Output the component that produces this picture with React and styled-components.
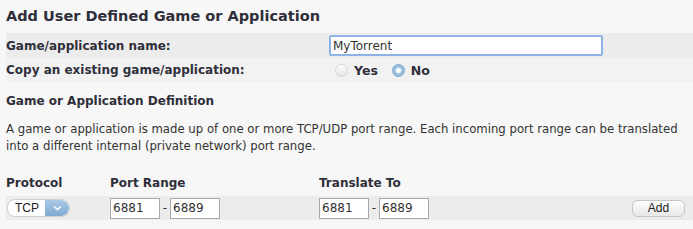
import React from "react";
import styled, { createGlobalStyle } from "styled-components";

const GlobalStyle = createGlobalStyle`
  html, body {
    margin: 0;
    padding: 0;
    background: #f7f7f7;
  }
  body {
    font-family: "DejaVu Sans", Verdana, sans-serif;
    color: #333;
  }
`;

const Page = styled.div`
  width: 693px;
  height: 229px;
  overflow: hidden;
  background: #f7f7f7;
  padding-top: 6px;
  box-sizing: border-box;
`;

const Title = styled.h2`
  margin: 0 0 7px 6px;
  font-size: 14.5px;
  font-weight: bold;
  color: #2f2f3a;
  line-height: 20px;
`;

const FormRow = styled.div`
  display: grid;
  grid-template-columns: 323px 1fr;
  align-items: center;
  margin-left: 6px;
  height: ${(p) => p.$h || 24}px;
  background: ${(p) => (p.$shade ? "#ececec" : "#f2f2f2")};
`;

const Label = styled.div`
  font-size: 12px;
  font-weight: bold;
  color: #2f2f3a;
`;

const NameInput = styled.input`
  width: 274px;
  height: 21px;
  box-sizing: border-box;
  border: 2px solid #8fb3e6;
  border-radius: 2px;
  background: #fff;
  font-family: "DejaVu Sans", Verdana, sans-serif;
  font-size: 12px;
  color: #333;
  padding: 0 2px;
  outline: none;
`;

const RadioGroup = styled.div`
  display: flex;
  align-items: center;
  gap: 6px;
  padding-left: 6px;
`;

const Radio = styled.span`
  width: 13px;
  height: 13px;
  border-radius: 50%;
  box-sizing: border-box;
  border: 1px solid ${(p) => (p.$on ? "#7ea8cf" : "#d4d4d4")};
  background: ${(p) =>
    p.$on
      ? "radial-gradient(circle, #fff 0 2px, #a9c8e3 3px, #7ea8cf 100%)"
      : "linear-gradient(#ffffff, #e4e4e4)"};
`;

const RadioText = styled.span`
  font-size: 12.5px;
  font-weight: bold;
  color: #2f2f3a;
  margin-right: 8px;
`;

const Section = styled.h3`
  margin: 11px 0 0 6px;
  font-size: 12px;
  font-weight: bold;
  color: #2f2f3a;
  line-height: 16px;
`;

const Para = styled.p`
  margin: 12px 0 0 6px;
  width: 684px;
  font-size: 11.7px;
  line-height: 17px;
  color: #333;
`;

const HeadRow = styled.div`
  display: grid;
  grid-template-columns: 104px 209px 1fr;
  margin: 19px 0 0 6px;
  height: 18px;
  align-items: center;
`;

const EntryRow = styled.div`
  display: grid;
  grid-template-columns: 104px 209px 1fr auto;
  align-items: center;
  margin: 4px 0 0 6px;
  height: 24px;
  background: #ececec;
  padding-right: 8px;
`;

const Select = styled.div`
  display: flex;
  width: 63px;
  height: 18px;
  margin-left: 1px;
  border: 1px solid #cfcfcf;
  border-radius: 8px;
  background: #fff;
  overflow: hidden;
  box-sizing: border-box;
`;

const SelectText = styled.span`
  flex: 1;
  font-family: "Liberation Sans", Arial, sans-serif;
  font-size: 12px;
  line-height: 16px;
  padding-left: 7px;
  color: #222;
`;

const SelectArrow = styled.span`
  width: 24px;
  display: flex;
  align-items: center;
  justify-content: center;
  background: linear-gradient(#a9c9e6, #7fa9d1);
  border-radius: 0 8px 8px 0;
`;

const Range = styled.div`
  display: flex;
  align-items: center;
`;

const PortInput = styled.input`
  width: 50px;
  height: 21px;
  box-sizing: border-box;
  border: 1px solid #a9a9a9;
  background: #fff;
  font-family: "DejaVu Sans", Verdana, sans-serif;
  font-size: 12px;
  color: #333;
  padding: 0 2px;
  outline: none;
`;

const Dash = styled.span`
  font-size: 12px;
  width: 10px;
  text-align: center;
`;

const AddButton = styled.button`
  width: 53px;
  height: 17px;
  padding: 0;
  border: 1px solid #c6c6c6;
  border-radius: 6px;
  background: linear-gradient(#fdfdfd, #e8e8e8);
  font-family: "Liberation Sans", Arial, sans-serif;
  font-size: 12px;
  color: #222;
`;

export default function App() {
  return (
    <Page>
      <GlobalStyle />
      <Title>Add User Defined Game or Application</Title>
      <FormRow $shade $h={25}>
        <Label>Game/application name:</Label>
        <NameInput defaultValue="MyTorrent" />
      </FormRow>
      <FormRow>
        <Label>Copy an existing game/application:</Label>
        <RadioGroup>
          <Radio />
          <RadioText>Yes</RadioText>
          <Radio $on />
          <RadioText>No</RadioText>
        </RadioGroup>
      </FormRow>
      <Section>Game or Application Definition</Section>
      <Para>
        A game or application is made up of one or more TCP/UDP port range. Each incoming port range can be translated
        into a different internal (private network) port range.
      </Para>
      <HeadRow>
        <Label>Protocol</Label>
        <Label>Port Range</Label>
        <Label>Translate To</Label>
      </HeadRow>
      <EntryRow>
        <Select>
          <SelectText>TCP</SelectText>
          <SelectArrow>
            <svg width="9" height="6" viewBox="0 0 9 6">
              <path d="M1 1.5 L4.5 4.5 L8 1.5" fill="none" stroke="#fff" strokeWidth="1.5" />
            </svg>
          </SelectArrow>
        </Select>
        <Range>
          <PortInput defaultValue="6881" />
          <Dash>-</Dash>
          <PortInput defaultValue="6889" />
        </Range>
        <Range>
          <PortInput defaultValue="6881" />
          <Dash>-</Dash>
          <PortInput defaultValue="6889" />
        </Range>
        <AddButton>Add</AddButton>
      </EntryRow>
    </Page>
  );
}
